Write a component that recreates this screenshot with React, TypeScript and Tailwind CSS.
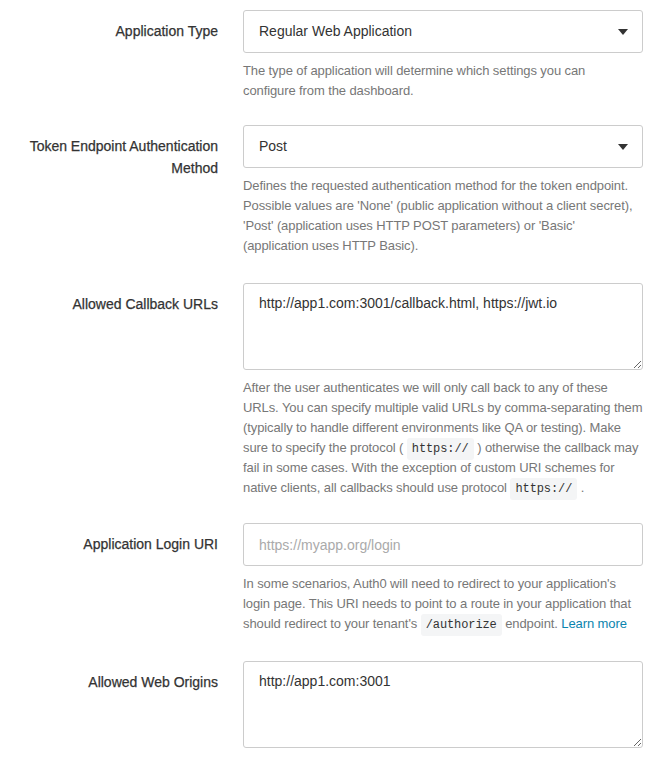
import React from "react";

const font = { fontFamily: '"Liberation Sans", Arial, sans-serif' };

function Code({ children }: { children: React.ReactNode }) {
  return (
    <code className="rounded-[3px] bg-[#f4f5f6] px-[5px] py-[4px] text-[12px] leading-none text-[#333] [font-family:'Liberation_Mono',monospace]">
      {children}
    </code>
  );
}

function Row({
  label,
  children,
  help,
  mb = "mb-[25px]",
}: {
  label: React.ReactNode;
  children: React.ReactNode;
  help?: React.ReactNode[];
  mb?: string;
}) {
  return (
    <div className={"flex gap-[25px] " + mb}>
      <div className="w-[218px] shrink-0 pt-[10px] text-right text-[14px] leading-[22px] text-[#333] [-webkit-text-stroke:0.25px_#333]">
        {label}
      </div>
      <div className="w-[400px] shrink-0">
        {children}
        {help && (
          <div className="mt-[8px] text-[13px] leading-[20px] tracking-[-0.1px] text-[#777]">
            {help.map((l, i) => (
              <div key={i} className="whitespace-nowrap">
                {l}
              </div>
            ))}
          </div>
        )}
      </div>
    </div>
  );
}

function Select({ value }: { value: string }) {
  return (
    <div className="flex h-[43px] items-center justify-between rounded-[3px] border border-[#ccc] bg-white pl-[15px] pr-[14px] text-[14px] text-[#333]">
      <span>{value}</span>
      <svg width="10" height="6" viewBox="0 0 10 6">
        <path d="M0 0 L10 0 L5 6 Z" fill="#333" />
      </svg>
    </div>
  );
}

function TextArea({ value }: { value: string }) {
  return (
    <textarea
      readOnly
      defaultValue={value}
      className="block h-[87px] w-full resize-y rounded-[3px] border border-[#ccc] bg-white px-[15px] pt-[9px] text-[14px] leading-[20px] text-[#333] outline-none"
      style={font}
    />
  );
}

export default function App() {
  return (
    <div className="min-h-[757px] w-[665px] bg-white pt-[10px]" style={font}>
      <Row
        label="Application Type"
        mb="mb-[24px]"
        help={[
          "The type of application will determine which settings you can",
          "configure from the dashboard.",
        ]}
      >
        <Select value="Regular Web Application" />
      </Row>
      <Row
        label={
          <>
            Token Endpoint Authentication
            <br />
            Method
          </>
        }
        mb="mb-[27px]"
        help={[
          "Defines the requested authentication method for the token endpoint.",
          "Possible values are 'None' (public application without a client secret),",
          "'Post' (application uses HTTP POST parameters) or 'Basic'",
          "(application uses HTTP Basic).",
        ]}
      >
        <Select value="Post" />
      </Row>
      <Row
        label="Allowed Callback URLs"
        help={[
          "After the user authenticates we will only call back to any of these",
          "URLs. You can specify multiple valid URLs by comma-separating them",
          "(typically to handle different environments like QA or testing). Make",
          <>
            sure to specify the protocol ( <Code>https://</Code> ) otherwise the callback may
          </>,
          "fail in some cases. With the exception of custom URI schemes for",
          <>
            native clients, all callbacks should use protocol <Code>https://</Code> .
          </>,
        ]}
      >
        <TextArea value="http://app1.com:3001/callback.html, https://jwt.io" />
      </Row>
      <Row
        label="Application Login URI"
        mb="mb-[27px]"
        help={[
          "In some scenarios, Auth0 will need to redirect to your application's",
          "login page. This URI needs to point to a route in your application that",
          <>
            should redirect to your tenant's <Code>/authorize</Code> endpoint.{" "}
            <a className="text-[#0a84ae]">Learn more</a>
          </>,
        ]}
      >
        <input
          readOnly
          placeholder="https://myapp.org/login"
          className="block h-[43px] w-full rounded-[3px] border border-[#ccc] bg-white px-[15px] text-[14px] text-[#333] outline-none placeholder:text-[#aaa]"
          style={font}
        />
      </Row>
      <Row label="Allowed Web Origins" mb="mb-0">
        <TextArea value="http://app1.com:3001" />
      </Row>
    </div>
  );
}
